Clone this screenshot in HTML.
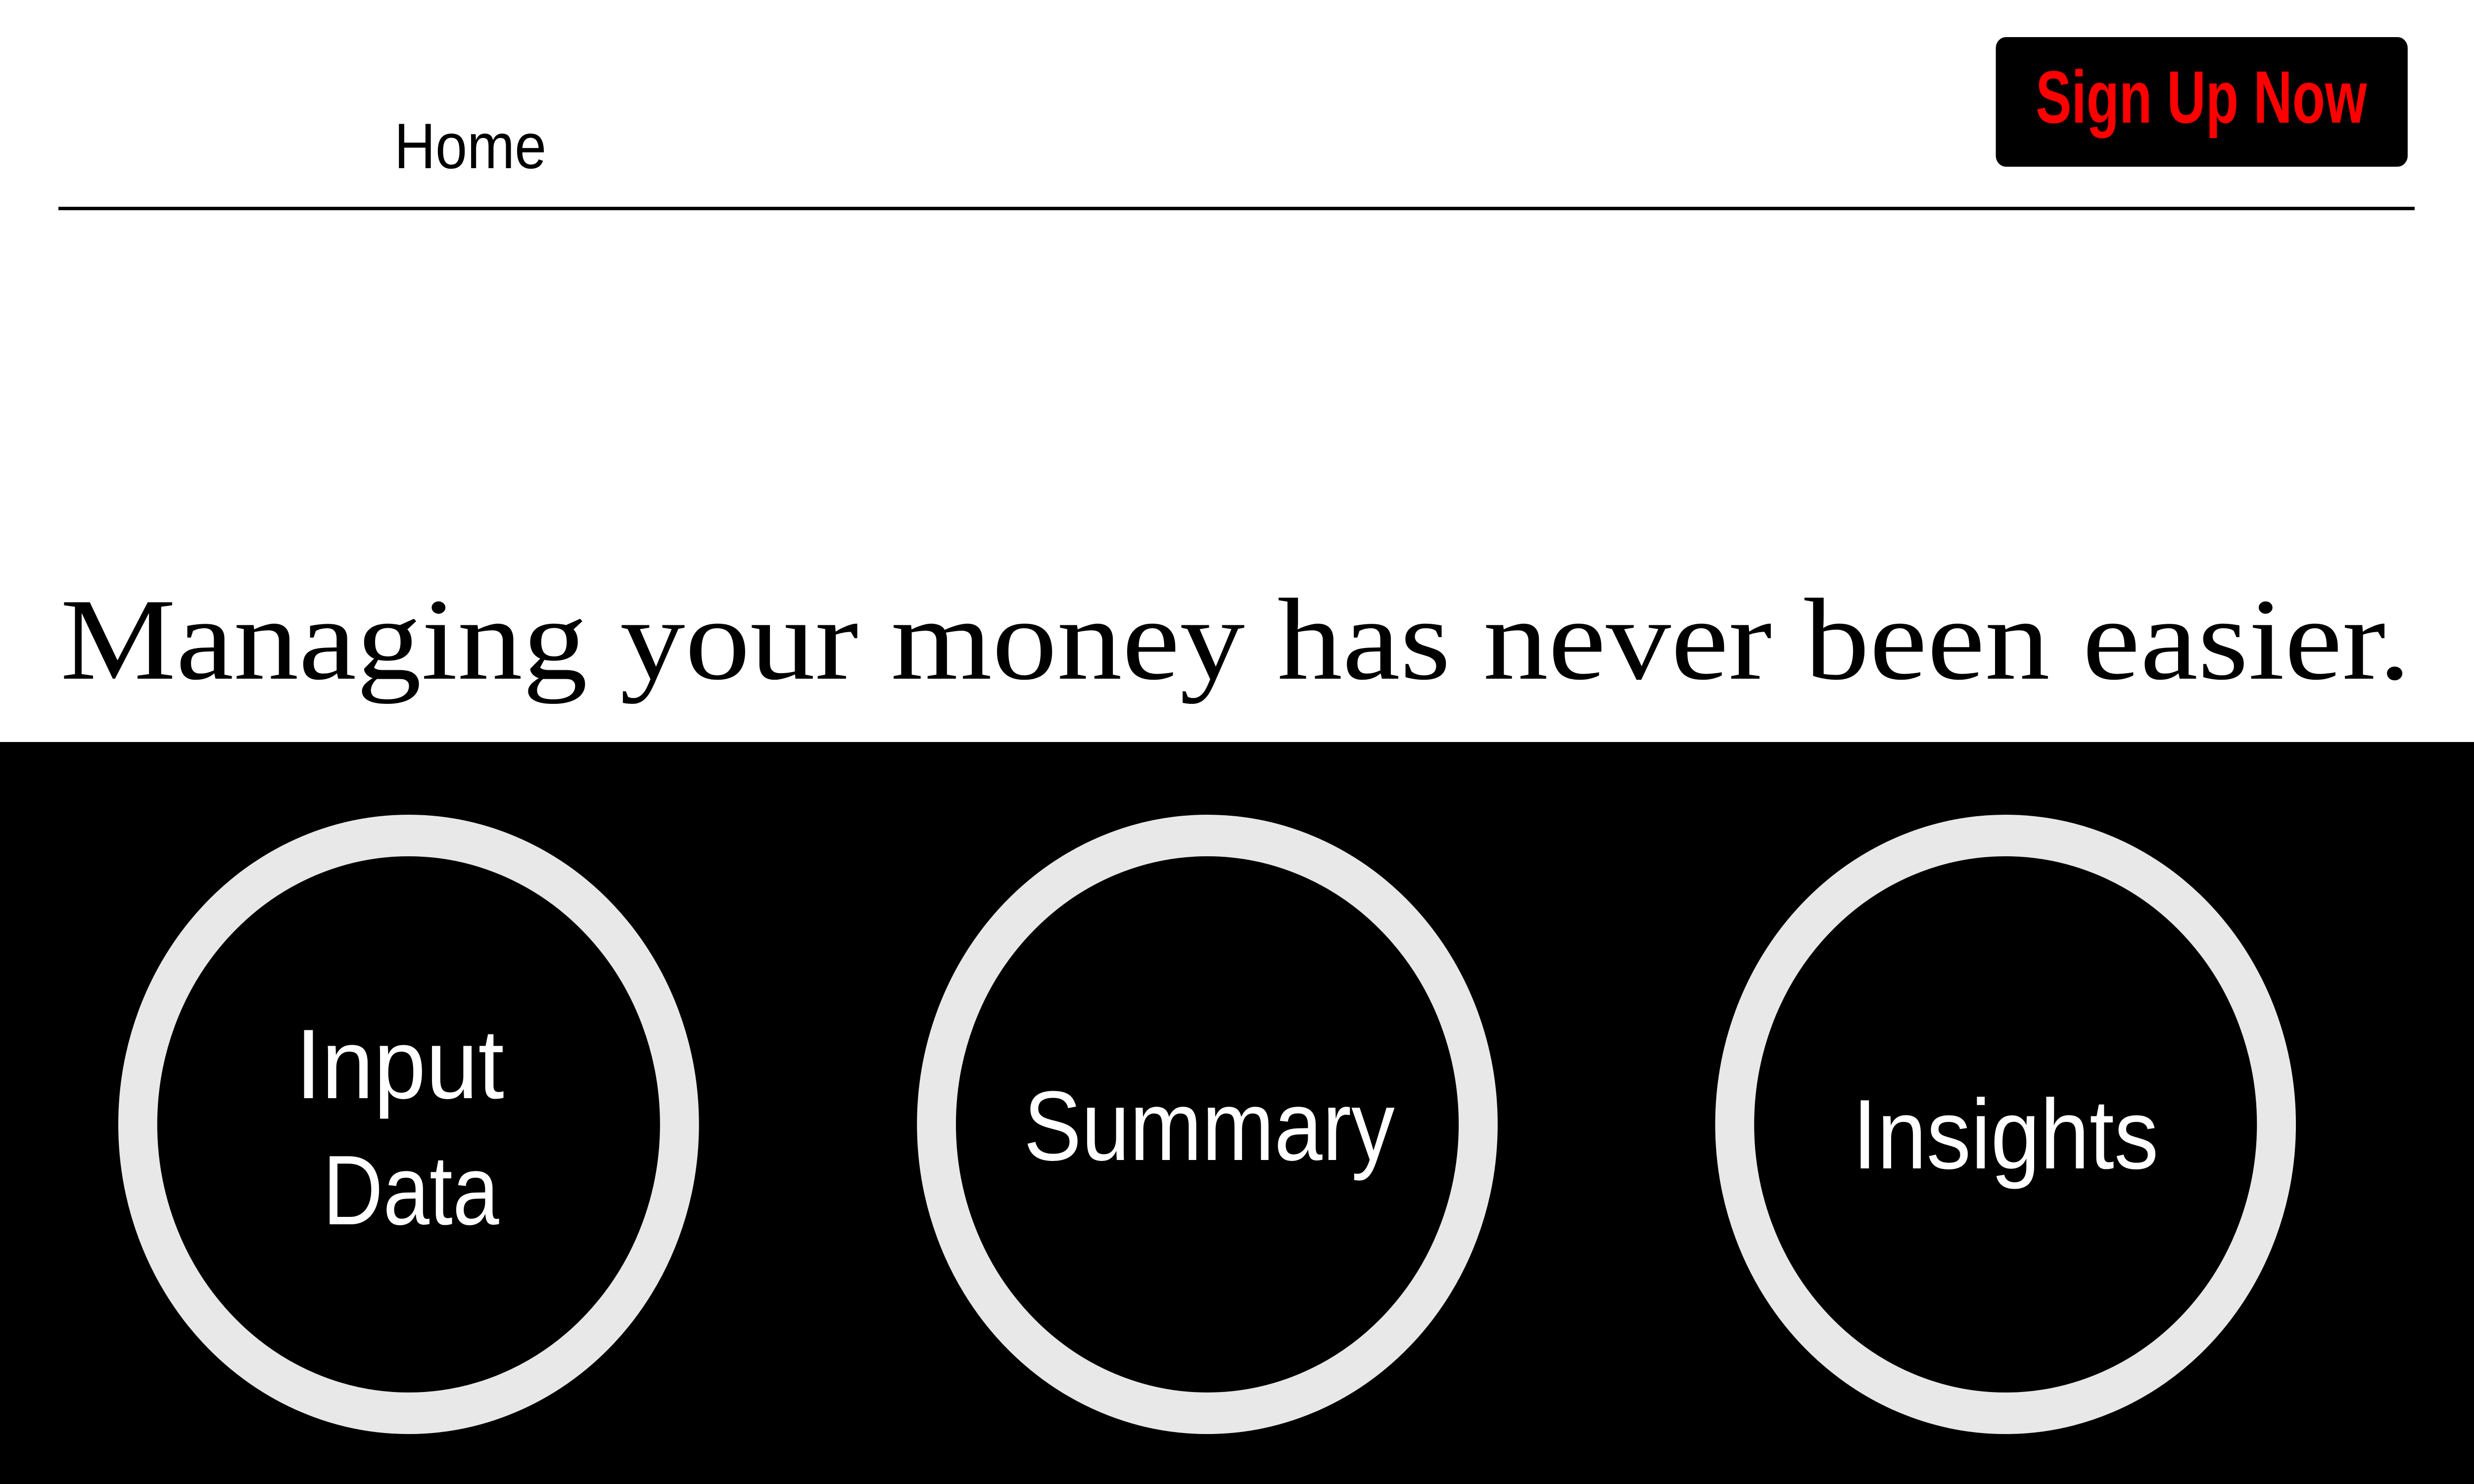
<!DOCTYPE html>
<html><head><meta charset="utf-8"><style>
html,body{margin:0;padding:0;background:#fff;width:100%;height:100%;overflow:hidden}
svg{display:block;position:fixed;left:0;top:0;width:100vw;height:100vh}
</style></head><body>
<svg viewBox="0 0 5334 3000" preserveAspectRatio="none" xmlns="http://www.w3.org/2000/svg">
<rect width="5334" height="3000" fill="#fff"/>
<text x="850" y="340" font-family="Liberation Sans Narrow, Liberation Sans, sans-serif" font-size="130" fill="#000" textLength="328" lengthAdjust="spacingAndGlyphs">Home</text>
<rect x="126" y="418" width="5080" height="7" fill="#000"/>
<rect x="4303" y="75" width="888" height="262" rx="22" fill="#000"/>
<text x="4389" y="248" font-family="Liberation Sans Narrow, Liberation Sans, sans-serif" font-weight="bold" font-size="150" fill="#ff0000" textLength="714" lengthAdjust="spacingAndGlyphs">Sign Up Now</text>
<text x="130" y="1372" font-family="Liberation Serif, serif" font-size="236" fill="#000" textLength="5068" lengthAdjust="spacingAndGlyphs">Managing your money has never been easier.</text>
<rect x="0" y="1500" width="5334" height="1500" fill="#000"/>
<g fill="none" stroke="#e8e8e8" stroke-width="84">
<circle cx="881" cy="2273" r="584"/>
<circle cx="2603" cy="2273" r="584"/>
<circle cx="4324" cy="2273" r="584"/>
</g>
<g font-family="Liberation Sans Narrow, Liberation Sans, sans-serif" font-size="200" fill="#fff" text-anchor="middle">
<text x="862" y="2220" textLength="450" lengthAdjust="spacingAndGlyphs">Input</text>
<text x="886" y="2475" textLength="380" lengthAdjust="spacingAndGlyphs">Data</text>
<text x="2607" y="2345" textLength="800" lengthAdjust="spacingAndGlyphs">Summary</text>
<text x="4324" y="2362" textLength="660" lengthAdjust="spacingAndGlyphs">Insights</text>
</g>
</svg>
</body></html>
